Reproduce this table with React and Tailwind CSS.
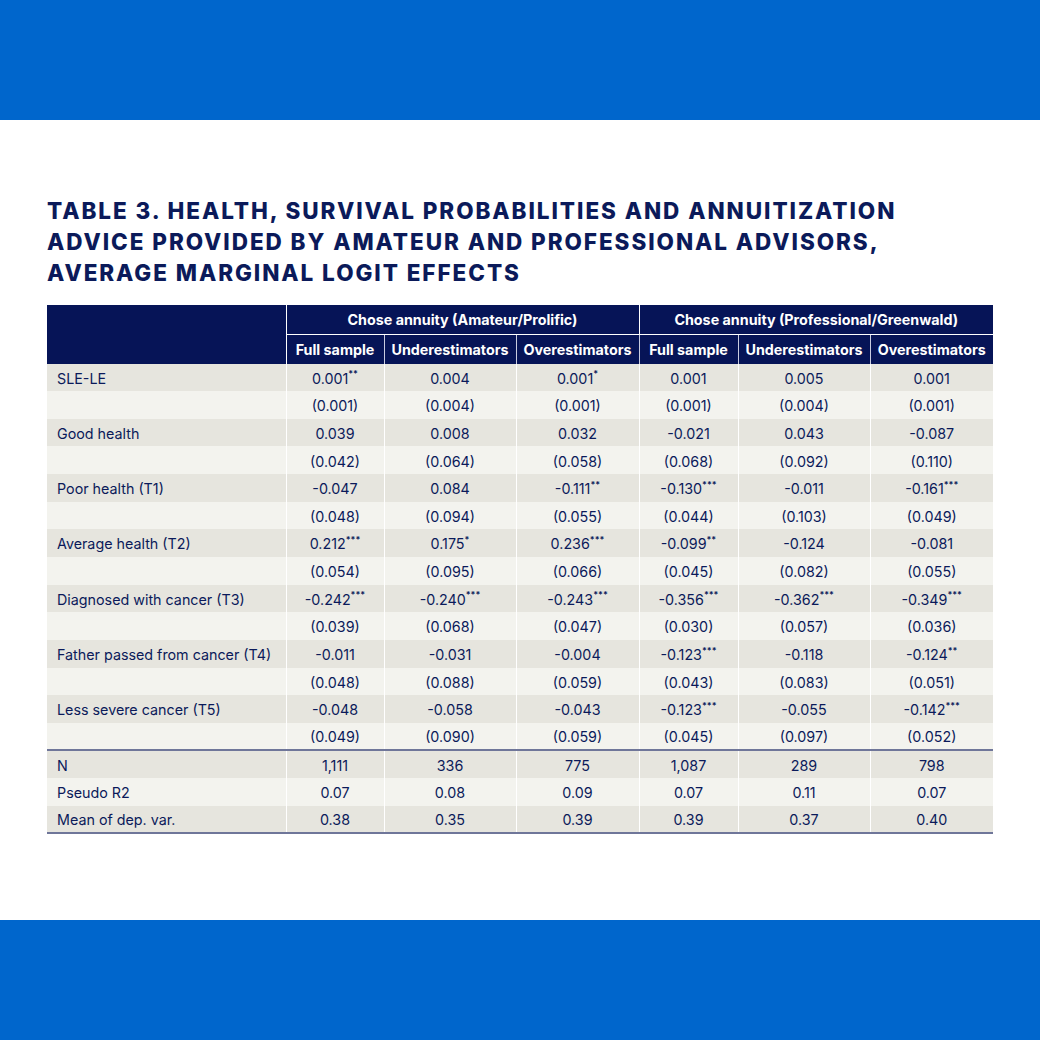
import React from "react";

const rows = [
  ["SLE-LE", ["0.001", "**"], ["0.004"], ["0.001", "*"], ["0.001"], ["0.005"], ["0.001"]],
  ["", ["(0.001)"], ["(0.004)"], ["(0.001)"], ["(0.001)"], ["(0.004)"], ["(0.001)"]],
  ["Good health", ["0.039"], ["0.008"], ["0.032"], ["-0.021"], ["0.043"], ["-0.087"]],
  ["", ["(0.042)"], ["(0.064)"], ["(0.058)"], ["(0.068)"], ["(0.092)"], ["(0.110)"]],
  ["Poor health (T1)", ["-0.047"], ["0.084"], ["-0.111", "**"], ["-0.130", "***"], ["-0.011"], ["-0.161", "***"]],
  ["", ["(0.048)"], ["(0.094)"], ["(0.055)"], ["(0.044)"], ["(0.103)"], ["(0.049)"]],
  ["Average health (T2)", ["0.212", "***"], ["0.175", "*"], ["0.236", "***"], ["-0.099", "**"], ["-0.124"], ["-0.081"]],
  ["", ["(0.054)"], ["(0.095)"], ["(0.066)"], ["(0.045)"], ["(0.082)"], ["(0.055)"]],
  ["Diagnosed with cancer (T3)", ["-0.242", "***"], ["-0.240", "***"], ["-0.243", "***"], ["-0.356", "***"], ["-0.362", "***"], ["-0.349", "***"]],
  ["", ["(0.039)"], ["(0.068)"], ["(0.047)"], ["(0.030)"], ["(0.057)"], ["(0.036)"]],
  ["Father passed from cancer (T4)", ["-0.011"], ["-0.031"], ["-0.004"], ["-0.123", "***"], ["-0.118"], ["-0.124", "**"]],
  ["", ["(0.048)"], ["(0.088)"], ["(0.059)"], ["(0.043)"], ["(0.083)"], ["(0.051)"]],
  ["Less severe cancer (T5)", ["-0.048"], ["-0.058"], ["-0.043"], ["-0.123", "***"], ["-0.055"], ["-0.142", "***"]],
  ["", ["(0.049)"], ["(0.090)"], ["(0.059)"], ["(0.045)"], ["(0.097)"], ["(0.052)"]],
  ["N", ["1,111"], ["336"], ["775"], ["1,087"], ["289"], ["798"]],
  ["Pseudo R2", ["0.07"], ["0.08"], ["0.09"], ["0.07"], ["0.11"], ["0.07"]],
  ["Mean of dep. var.", ["0.38"], ["0.35"], ["0.39"], ["0.39"], ["0.37"], ["0.40"]],
];

const subHeads = ["Full sample", "Underestimators", "Overestimators", "Full sample", "Underestimators", "Overestimators"];

export default function App() {
  return (
    <div className="w-[1040px] h-[1040px] flex flex-col bg-white text-[#0b1a5a]" style={{ fontFamily: "Inter, 'Liberation Sans', sans-serif" }}>
      <div className="h-[120px] bg-[#0066cc]" />

      <div className="h-[800px] px-[47px] pt-[75px]">
        <h1 className="text-[22.5px] font-extrabold leading-[31px] tracking-[0.086em] text-[#0b1a5a]">
          TABLE 3. HEALTH, SURVIVAL PROBABILITIES AND ANNUITIZATION
          <br />
          ADVICE PROVIDED BY AMATEUR AND PROFESSIONAL ADVISORS,
          <br />
          AVERAGE MARGINAL LOGIT EFFECTS
        </h1>

        <table className="mt-[17px] w-[946px] table-fixed border-collapse text-[14.3px]">
          <colgroup>
            <col className="w-[239px]" />
            <col className="w-[98px]" />
            <col className="w-[132px]" />
            <col className="w-[123px]" />
            <col className="w-[99px]" />
            <col className="w-[132px]" />
            <col className="w-[123px]" />
          </colgroup>
          <thead>
            <tr className="h-[29.5px] bg-[#061457] text-white">
              <th rowSpan={2} className="border-r border-white" />
              <th colSpan={3} className="border-r border-b border-white font-bold">Chose annuity (Amateur/Prolific)</th>
              <th colSpan={3} className="border-b border-white font-bold">Chose annuity (Professional/Greenwald)</th>
            </tr>
            <tr className="h-[29px] bg-[#061457] text-white">
              {subHeads.map((h, i) => (
                <th key={i} className={"font-bold whitespace-nowrap " + (i < 5 ? "border-r border-[#c9cce0]" : "")}>
                  {h}
                </th>
              ))}
            </tr>
          </thead>
          <tbody>
            {rows.map((r, i) => (
              <tr
                key={i}
                className={
                  "h-[27.65px] " +
                  (i % 2 === 0 ? "bg-[#e6e5de] " : "bg-[#f3f3ee] ") +
                  (i === 14 ? "border-t-2 border-t-[#6f7699] " : "") +
                  (i === 16 ? "border-b-2 border-b-[#6f7699]" : "")
                }
              >
                <td className="pl-[10px] pt-[2px] border-r border-white whitespace-nowrap">{r[0]}</td>
                {r.slice(1).map((c, j) => (
                  <td key={j} className={"text-center pt-[2px] " + (j < 5 ? "border-r border-white" : "")}>
                    {c[0]}
                    {c[1] && <sup className="text-[9px] font-semibold top-[-0.7em]">{c[1]}</sup>}
                  </td>
                ))}
              </tr>
            ))}
          </tbody>
        </table>
      </div>

      <div className="h-[120px] bg-[#0066cc]" />
    </div>
  );
}
